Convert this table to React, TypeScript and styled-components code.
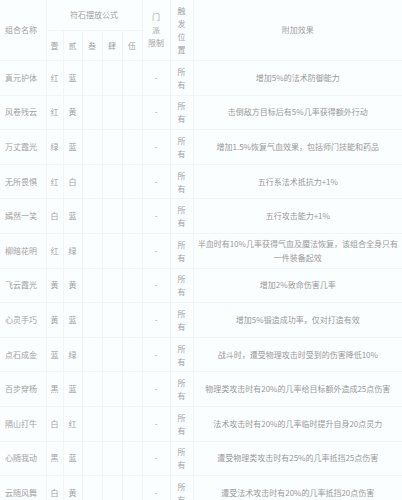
import React from "react";
import styled, {createGlobalStyle} from "styled-components";

const GlobalStyle = createGlobalStyle`
html, body {
  margin: 0;
  padding: 0;
  background: #fbfefe;
}
body {
  font-family: "Noto Sans CJK SC", "Noto Sans", sans-serif;
}
`;

const faint = "#f1f5f5";
const textGrey = "#a2a2a2";

const Page = styled.div`
width: 402px;
height: 500px;
overflow: hidden;
background: #fbfefe;
`;

const Table = styled.table`
width: 402px;
table-layout: fixed;
border-collapse: collapse;
font-size: 8px;
line-height: 14px;
color: ${textGrey};
`;

const Head = styled.th<{$align?: string}>`
font-weight: normal;
text-align: ${(p) => p.$align || "center"};
vertical-align: middle;
padding: 0 2px;
height: 30px;
border-bottom: 1px solid ${faint};
border-right: 1px solid ${faint};
`;

const SubHead = styled(Head)`
height: 29px;
padding: 0;
`;

const Row = styled.tr`
height: 34.6px;
`;

const Cell = styled.td<{$align?: string}>`
text-align: ${(p) => p.$align || "center"};
vertical-align: middle;
padding: 0;
border-bottom: 1px solid ${faint};
border-right: 1px solid ${faint};
`;

const NameCell = styled(Cell)`
text-align: left;
padding-left: 5px;
white-space: nowrap;
`;

const PlaceCell = styled(Cell)`
line-height: 13px;
padding: 0 4px;
`;

const EffectCell = styled(Cell)`
padding: 0 2px;
color: #999;
border-right: none;
`;

const Stack = styled.span`
display: inline-block;
line-height: 13px;
`;

type Combo = {
  name: string;
  a: string;
  b: string;
  effect: string;
};

const combos: Combo[] = [
  {name: "真元护体", a: "红", b: "蓝", effect: "增加5%的法术防御能力"},
  {name: "风卷残云", a: "红", b: "黄", effect: "击倒敌方目标后有5%几率获得额外行动"},
  {name: "万丈霞光", a: "绿", b: "蓝", effect: "增加1.5%恢复气血效果，包括师门技能和药品"},
  {name: "无所畏惧", a: "红", b: "白", effect: "五行系法术抵抗力+1%"},
  {name: "嫣然一笑", a: "白", b: "蓝", effect: "五行攻击能力+1%"},
  {name: "柳暗花明", a: "红", b: "绿", effect: "半血时有10%几率获得气血及魔法恢复，该组合全身只有一件装备起效"},
  {name: "飞云霞光", a: "黄", b: "黄", effect: "增加2%致命伤害几率"},
  {name: "心灵手巧", a: "黄", b: "蓝", effect: "增加5%锻造成功率，仅对打造有效"},
  {name: "点石成金", a: "蓝", b: "绿", effect: "战斗时，遭受物理攻击时受到的伤害降低10%"},
  {name: "百步穿杨", a: "黑", b: "蓝", effect: "物理类攻击时有20%的几率给目标额外造成25点伤害"},
  {name: "隔山打牛", a: "白", b: "红", effect: "法术攻击时有20%的几率临时提升自身20点灵力"},
  {name: "心随我动", a: "黑", b: "蓝", effect: "遭受物理类攻击时有25%的几率抵挡25点伤害"},
  {name: "云随风舞", a: "白", b: "黄", effect: "遭受法术攻击时有20%的几率抵挡20点伤害"},
];

const slots = ["壹", "贰", "叁", "肆", "伍"];

const App = () => {
  return (
    <Page>
      <GlobalStyle />
      <Table>
        <colgroup>
          <col style={{width: 46}} />
          <col style={{width: 17}} />
          <col style={{width: 19}} />
          <col style={{width: 20}} />
          <col style={{width: 20}} />
          <col style={{width: 20}} />
          <col style={{width: 28}} />
          <col style={{width: 23}} />
          <col />
        </colgroup>
        <thead>
          <tr>
            <Head rowSpan={2} $align="left" style={{paddingLeft: 5}}>组合名称</Head>
            <Head colSpan={5}>符石摆放公式</Head>
            <Head rowSpan={2}>
              <Stack>门<br />派<br />限制</Stack>
            </Head>
            <Head rowSpan={2}>
              <Stack>触<br />发<br />位<br />置</Stack>
            </Head>
            <Head rowSpan={2} style={{borderRight: "none"}}>附加效果</Head>
          </tr>
          <tr>
            {slots.map((s) => (
              <SubHead key={s}>{s}</SubHead>
            ))}
          </tr>
        </thead>
        <tbody>
          {combos.map((c) => (
            <Row key={c.name}>
              <NameCell>{c.name}</NameCell>
              <Cell>{c.a}</Cell>
              <Cell>{c.b}</Cell>
              <Cell></Cell>
              <Cell></Cell>
              <Cell></Cell>
              <Cell>-</Cell>
              <PlaceCell>所<br />有</PlaceCell>
              <EffectCell>{c.effect}</EffectCell>
            </Row>
          ))}
        </tbody>
      </Table>
    </Page>
  );
};

export default App;
